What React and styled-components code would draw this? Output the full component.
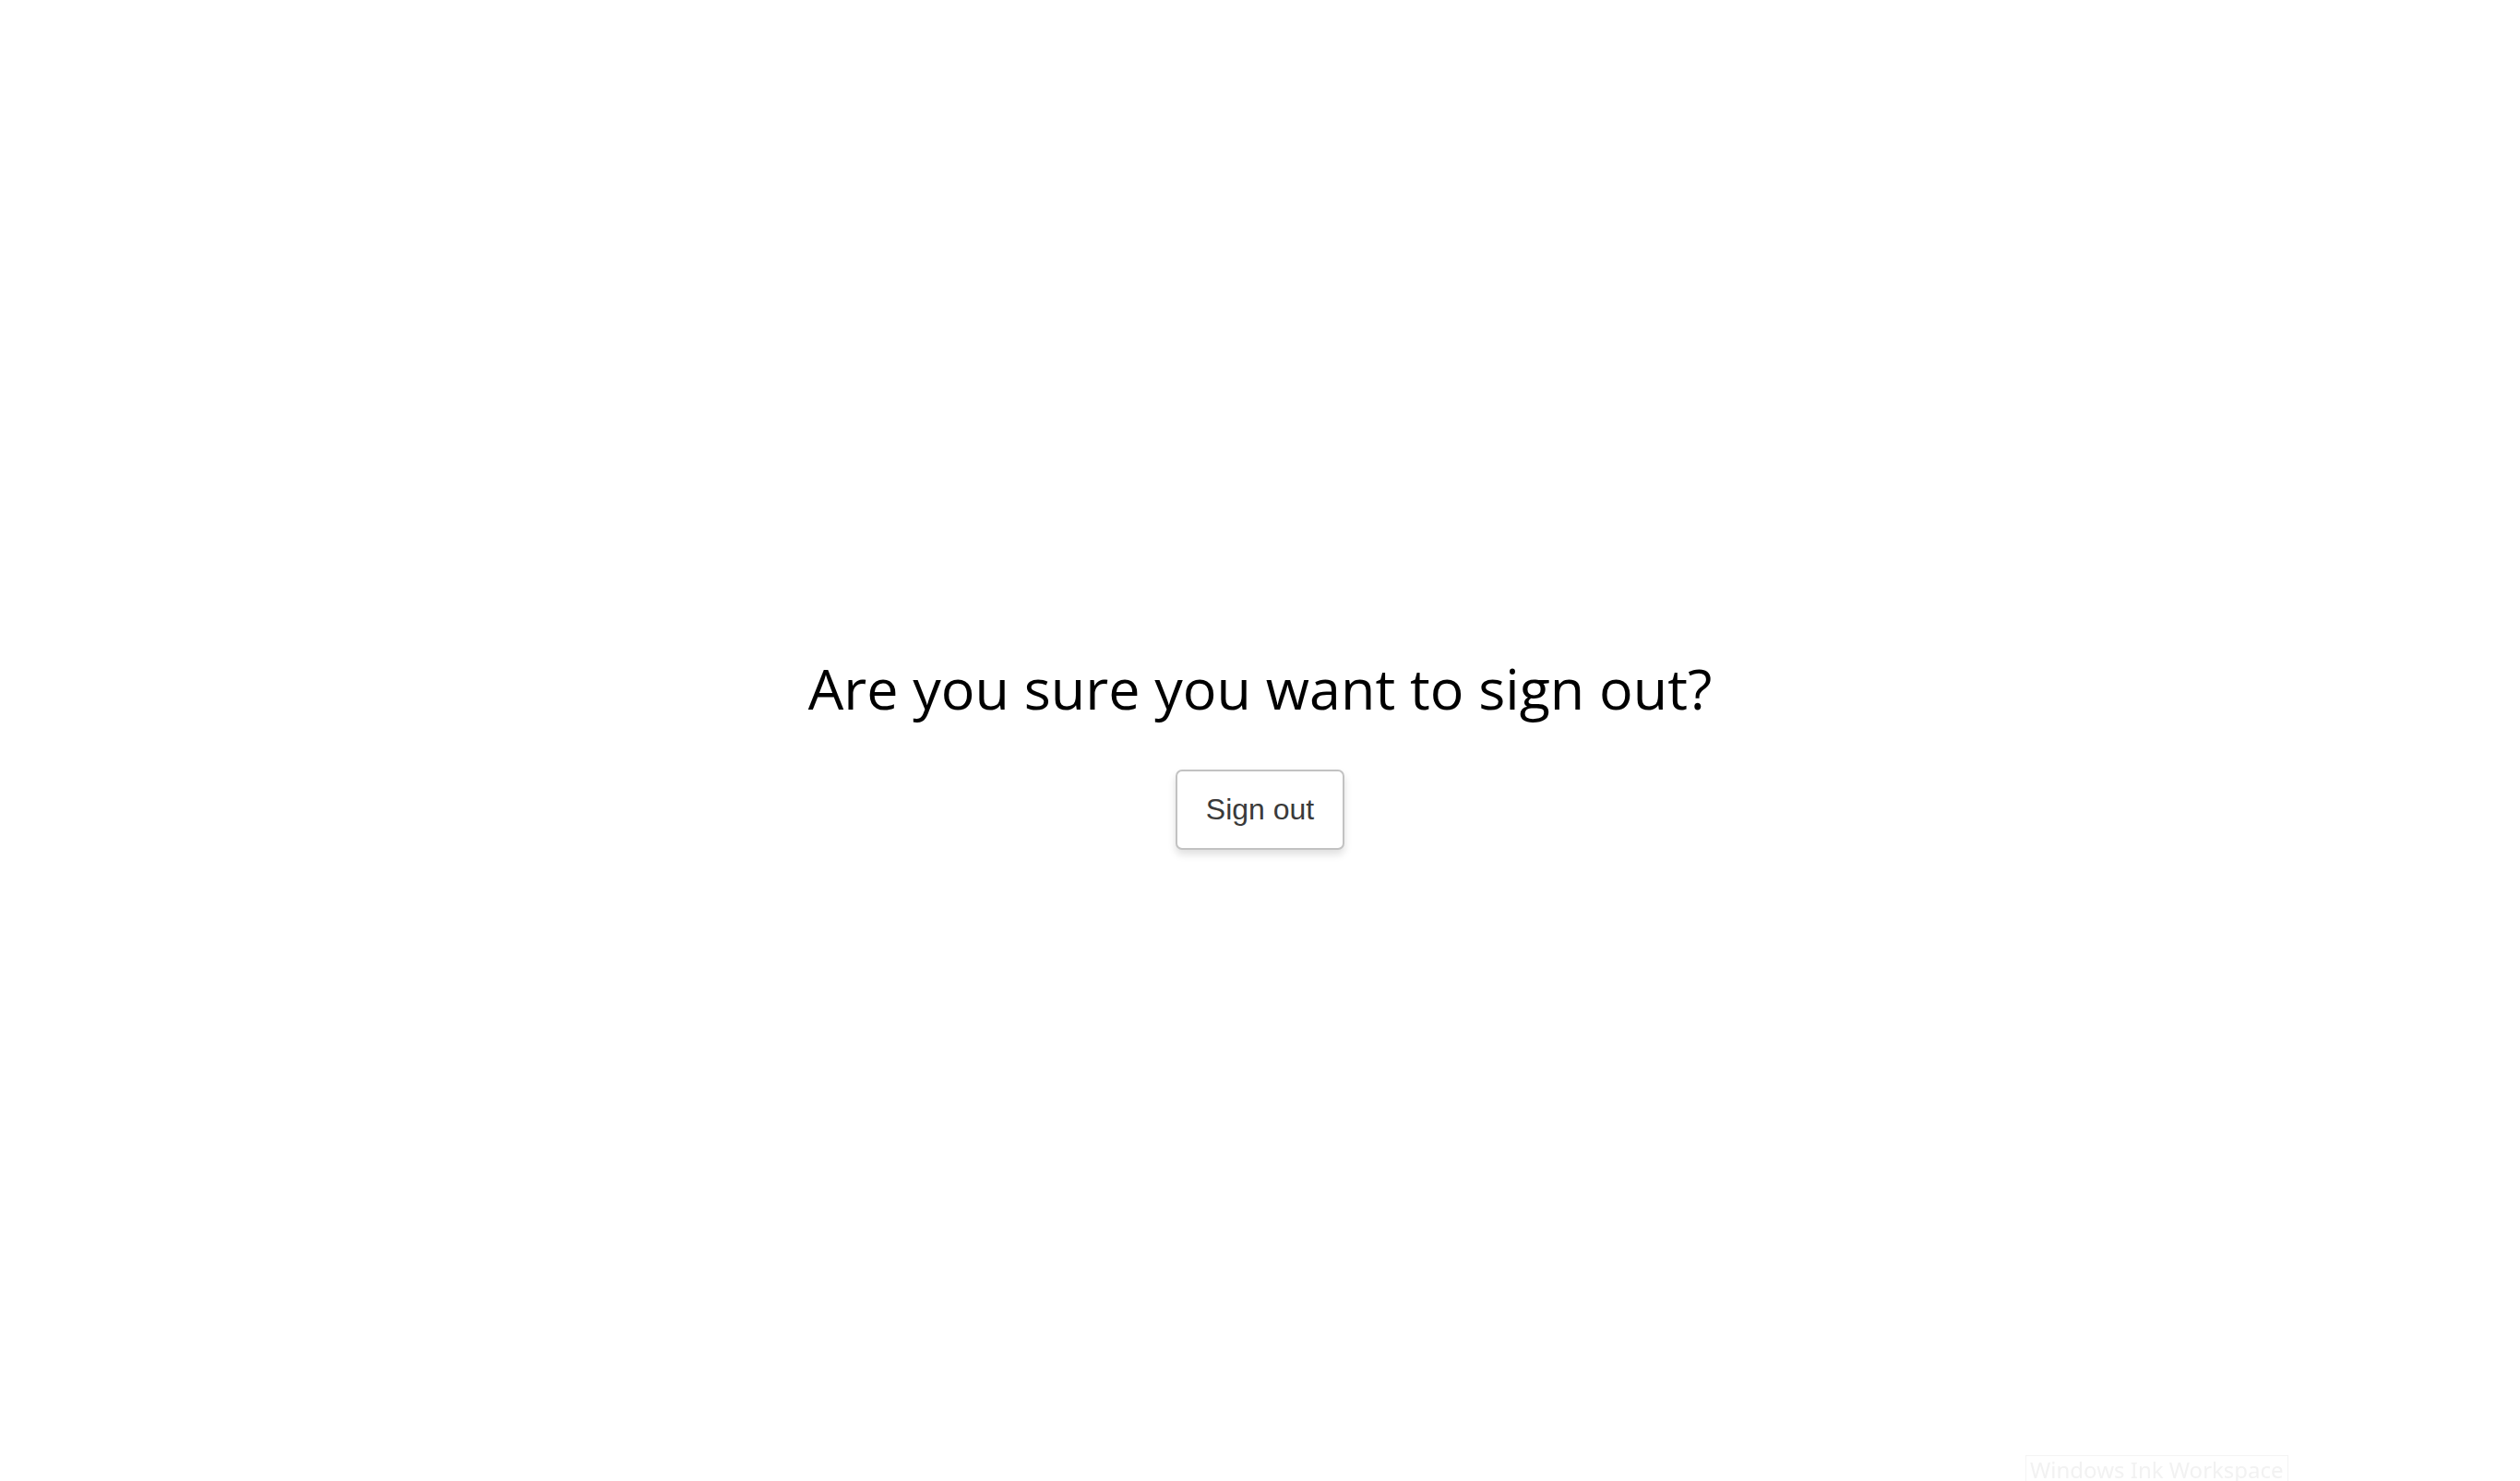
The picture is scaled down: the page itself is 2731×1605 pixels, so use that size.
import React from 'react'
import styled, { createGlobalStyle } from 'styled-components'

const GlobalStyle = createGlobalStyle`
  html, body {
    margin: 0;
    padding: 0;
    background: #fff;
  }
`

const Page = styled.main`
  box-sizing: border-box;
  min-height: 100vh;
  padding-top: 24px;
  display: flex;
  flex-direction: column;
  align-items: center;
  justify-content: center;
  gap: 52px;
`

const Title = styled.h1`
  margin: 0;
  font-family: "Open Sans", "Noto Sans", sans-serif;
  font-weight: 400;
  font-size: 61px;
  line-height: 73px;
  color: #000;
`

const Button = styled.button`
  font-family: "Liberation Sans", Arial, sans-serif;
  font-size: 32px;
  line-height: 37px;
  color: #3a3a3a;
  background: #fff;
  border: 2px solid #c2c2c2;
  border-radius: 7px;
  padding: 23px 31px;
  box-shadow: 0 5px 9px rgba(0, 0, 0, 0.13);
  cursor: pointer;
`

const InkTip = styled.div`
  position: fixed;
  left: 2195px;
  top: 1577px;
  padding: 0 4px;
  border: 1px solid #f4f4f4;
  font-family: "Noto Sans", sans-serif;
  font-size: 24px;
  line-height: 30px;
  color: #f2f2f2;
  white-space: nowrap;
`

export default function App() {
  return (
    <>
      <GlobalStyle />
      <Page>
        <Title>Are you sure you want to sign out?</Title>
        <Button>Sign out</Button>
      </Page>
      <InkTip>Windows Ink Workspace</InkTip>
    </>
  )
}
